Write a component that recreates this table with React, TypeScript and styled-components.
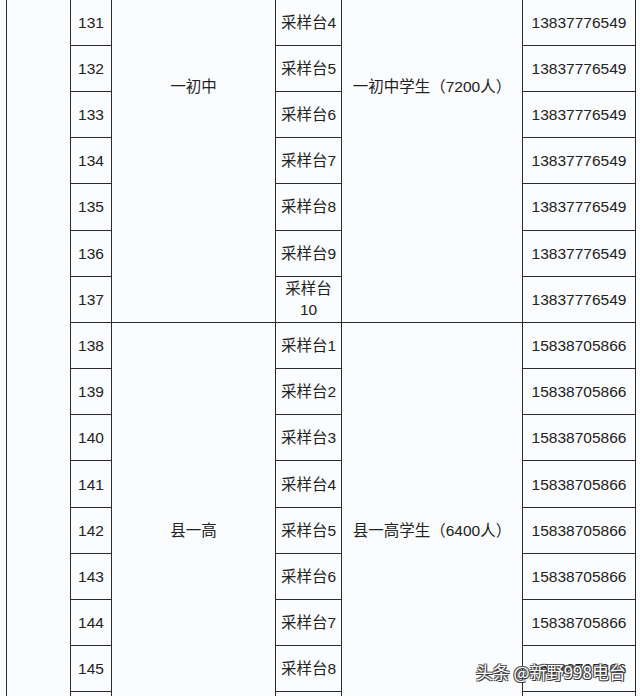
import styled, { createGlobalStyle } from 'styled-components';

const GlobalStyle = createGlobalStyle`
  html, body {
    margin: 0;
    padding: 0;
    background: #fbfcfe;
  }
`;

interface Group {
  school: string;
  students: string;
  phone: string;
  start: number;
  count: number;
}

const groups: Group[] = [
  { school: '一初中', students: '一初中学生（7200人）', phone: '13837776549', start: 128, count: 10 },
  { school: '县一高', students: '县一高学生（6400人）', phone: '15838705866', start: 138, count: 9 },
];

const totalRows = groups.reduce((n, g) => n + g.count, 0);

const App = () => {
  return (
    <Page>
      <GlobalStyle />
      <Sheet>
        <colgroup>
          <Col $w={64} />
          <Col $w={41} />
          <Col $w={164} />
          <Col $w={66} />
          <Col $w={181} />
          <Col $w={113} />
        </colgroup>
        <tbody>
          {groups.map((g, gi) =>
            Array.from({ length: g.count }).map((_, i) => (
              <Row key={g.start + i}>
                {gi === 0 && i === 0 && <Cell rowSpan={totalRows} />}
                <Cell>{g.start + i}</Cell>
                {i === 0 && (
                  <Cell rowSpan={g.count} $lift={gi === 0}>
                    {g.school}
                  </Cell>
                )}
                <Cell $pad>{`采样台${i + 1}`}</Cell>
                {i === 0 && (
                  <Cell rowSpan={g.count} $lift={gi === 0}>
                    {g.students}
                  </Cell>
                )}
                <Cell>{g.phone}</Cell>
              </Row>
            ))
          )}
        </tbody>
      </Sheet>
      <Watermark>头条 @新野998电台</Watermark>
    </Page>
  );
};

const Page = styled.div`
  position: relative;
  width: 640px;
  height: 696px;
  overflow: hidden;
  padding-left: 6px;
  box-sizing: border-box;
  background: #fbfcfe;
`;

const Sheet = styled.table`
  margin-top: -140px;
  width: 630px;
  table-layout: fixed;
  border-collapse: collapse;
  font-family: 'Liberation Sans', 'Noto Sans CJK SC', sans-serif;
  font-size: 15.5px;
  color: #222;
`;

const Col = styled.col<{ $w: number }>`
  width: ${(p) => p.$w}px;
`;

const Row = styled.tr`
  height: 46.2px;
`;

const Cell = styled.td<{ $pad?: boolean; $lift?: boolean }>`
  border: 1px solid #2b2b2b;
  padding: ${(p) => (p.$pad ? '0 4px' : '0')};
  padding-bottom: ${(p) => (p.$lift ? '10px' : '0')};
  text-align: center;
  vertical-align: middle;
  line-height: 21px;
`;

const Watermark = styled.div`
  position: absolute;
  right: 14px;
  bottom: 12px;
  font-family: 'Noto Sans CJK SC', sans-serif;
  font-size: 17px;
  color: #fff;
  text-shadow: 1px 1px 0 #333, -1px -1px 0 #555, 1px -1px 0 #555, -1px 1px 0 #555;
`;

export default App;
